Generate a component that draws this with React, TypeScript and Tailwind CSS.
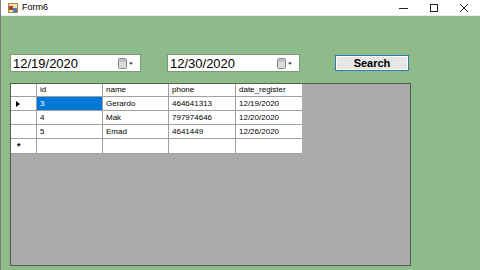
import React from 'react';

const cols = [26, 66, 66, 67, 66];

const rows = [
  { marker: 'arrow', cells: ['3', 'Gerardo', '464641313', '12/19/2020'] },
  { marker: '', cells: ['4', 'Mak', '797974646', '12/20/2020'] },
  { marker: '', cells: ['5', 'Emad', '4641449', '12/26/2020'] },
];

function CalendarDrop() {
  return (
    <svg width="16" height="11" viewBox="0 0 16 11" className="shrink-0">
      <rect x="0.5" y="0.5" width="8" height="10" rx="1" fill="#d9d9d9" stroke="#8a8a8a" />
      <rect x="1.5" y="1.5" width="6" height="2" fill="#b5b5b5" />
      <path d="M11 4.5 L15 4.5 L13 6.8 Z" fill="#333" />
    </svg>
  );
}

function DateBox({ value, width }: { value: string; width: string }) {
  return (
    <div className={`${width} flex h-[18px] items-center justify-between border border-[#7a9a78] bg-white pl-[2px] pr-[6px]`}>
      <span className="text-[13px] leading-none text-black">{value}</span>
      <CalendarDrop />
    </div>
  );
}

function Cell({ children, w, h, selected = false, last = false }: { children?: React.ReactNode; w: number; h: number; selected?: boolean; last?: boolean }) {
  return (
    <div
      style={{ width: w, height: h }}
      className={`flex shrink-0 items-center border-b border-[#a0a0a0] pl-[3px] text-[8px] leading-none ${last ? '' : 'border-r'} ${selected ? 'bg-[#0078d7] text-white' : 'bg-white text-black'}`}
    >
      {children}
    </div>
  );
}

export default function App() {
  return (
    <div className="flex h-[270px] w-[480px] flex-col overflow-hidden border-l border-[#7b7b7b] bg-[#8dbb89] font-['Liberation_Sans',Arial,sans-serif]">
      {/* title bar */}
      <div className="flex h-[15px] shrink-0 items-center bg-white">
        <svg width="10" height="10" viewBox="0 0 10 10" className="ml-[7px]">
          <rect x="0.5" y="0.5" width="9" height="9" fill="#f4e3a1" stroke="#9a8a4a" />
          <rect x="1" y="3" width="4" height="4" fill="#c0392b" />
          <rect x="5" y="5" width="4" height="4" fill="#4a7fc1" />
        </svg>
        <span className="ml-[4px] text-[9px] leading-none text-black">Form6</span>
        <div className="ml-auto flex items-center">
          <svg width="30" height="10" viewBox="0 0 30 10"><path d="M10 5.5 H19" stroke="#222" strokeWidth="1" /></svg>
          <svg width="30" height="10" viewBox="0 0 30 10"><rect x="11.5" y="1.5" width="7" height="7" fill="none" stroke="#222" /></svg>
          <svg width="30" height="10" viewBox="0 0 30 10" className="mr-[1px]"><path d="M11 1 L19 9 M19 1 L11 9" stroke="#222" strokeWidth="1" /></svg>
        </div>
      </div>
      <div className="h-px shrink-0 bg-[#e8efe8]" />

      {/* controls */}
      <div className="mt-[38px] flex items-start">
        <div className="ml-[9px]"><DateBox value="12/19/2020" width="w-[131px]" /></div>
        <div className="ml-[26px]"><DateBox value="12/30/2020" width="w-[133px]" /></div>
        <button className="ml-[35px] mt-[1px] flex h-[16px] w-[74px] items-center justify-center border border-[#2f7db5] bg-[#e6e6e6] text-[11px] font-bold leading-none text-black shadow-[inset_0_0_0_1px_#ffffff]">
          Search
        </button>
      </div>

      {/* grid */}
      <div className="ml-[9px] mt-[11px] h-[183px] w-[401px] border border-[#4f5f4f] bg-[#ababab]">
        <div className="flex">
          {['', 'id', 'name', 'phone', 'date_register'].map((t, i) => (
            <Cell key={i} w={cols[i]} h={13} last={i === 4}>{t}</Cell>
          ))}
        </div>
        {rows.map((r, ri) => (
          <div key={ri} className="flex">
            <Cell w={cols[0]} h={14}>
              {r.marker === 'arrow' && (
                <svg width="5" height="6" viewBox="0 0 5 6" className="ml-[2px]"><path d="M0 0 L4 3 L0 6 Z" fill="#000" /></svg>
              )}
            </Cell>
            {r.cells.map((c, ci) => (
              <Cell key={ci} w={cols[ci + 1]} h={14} selected={ri === 0 && ci === 0} last={ci === 3}>{c}</Cell>
            ))}
          </div>
        ))}
        <div className="flex">
          <Cell w={cols[0]} h={15}><span className="ml-[3px] text-[9px] font-bold">*</span></Cell>
          {[1, 2, 3, 4].map((i) => (
            <Cell key={i} w={cols[i]} h={15} last={i === 4} />
          ))}
        </div>
      </div>
    </div>
  );
}
